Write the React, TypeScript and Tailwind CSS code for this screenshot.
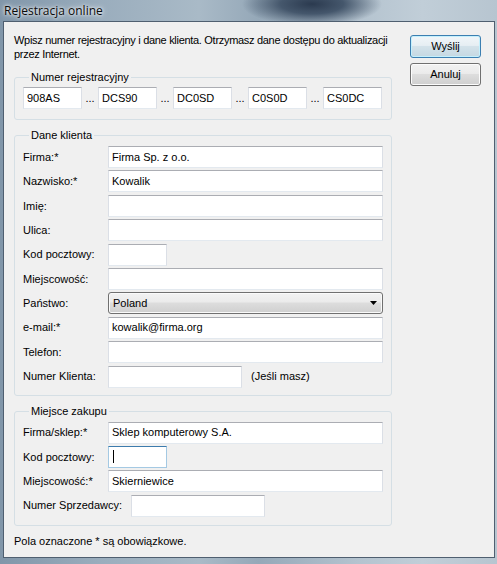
import React from 'react';

const font = "font-['Liberation_Sans',Arial,sans-serif]";

const TextBox = ({ value, className = '', focused = false }: { value?: string; className?: string; focused?: boolean }) => (
  <div
    className={`h-[22px] bg-white border flex items-center pl-[3px] text-[11px] text-black whitespace-nowrap overflow-hidden ${
      focused
        ? 'border-[#a4c9e3] border-t-[#3d7bad]'
        : 'border-[#e3e9ef] border-t-[#abadb3] border-x-[#dbdfe6]'
    } ${className}`}
  >
    {value}
    {focused && <span className="ml-[1px] w-[1px] h-[13px] bg-black" />}
  </div>
);

const Row = ({ label, labelW = 'w-[85px]', children }: { label: string; labelW?: string; children: React.ReactNode }) => (
  <div className="flex items-center h-[22px]">
    <span className={`${labelW} shrink-0 text-[11px] text-black`}>{label}</span>
    {children}
  </div>
);

const Group = ({ title, children, className = '' }: { title: string; children: React.ReactNode; className?: string }) => (
  <fieldset className={`border border-[#d5dfe5] rounded-[3px] px-[8px] ${className}`}>
    <legend className="ml-[6px] px-[2px] text-[11px] leading-[13px] text-black">{title}</legend>
    {children}
  </fieldset>
);

const Button = ({ label, primary = false }: { label: string; primary?: boolean }) => (
  <div
    className={`w-[71px] h-[23px] rounded-[3px] border flex items-center justify-center text-[11px] text-black ${
      primary
        ? 'border-[#3c7fb1] shadow-[inset_0_0_0_1px_#c4f0fd] bg-[linear-gradient(#f1f6f9_0%,#e6eef3_45%,#d3e2ea_50%,#c5d8e2_100%)]'
        : 'border-[#707070] shadow-[inset_0_0_0_1px_#fcfcfc] bg-[linear-gradient(#f2f2f2_0%,#ebebeb_45%,#dddddd_50%,#cfcfcf_100%)]'
    }`}
  >
    {label}
  </div>
);

const RegNumbers = () => {
  const parts = ['908AS', 'DCS90', 'DC0SD', 'C0S0D', 'CS0DC'];
  return (
    <div className="flex items-center">
      {parts.map((p, i) => (
        <React.Fragment key={p}>
          {i > 0 && <span className="w-[16px] text-center text-[11px] text-black">...</span>}
          <TextBox value={p} className="w-[59px]" />
        </React.Fragment>
      ))}
    </div>
  );
};

export default function App() {
  return (
    <div
      className={`w-[497px] h-[564px] flex flex-col ${font} bg-[radial-gradient(ellipse_70px_22px_at_312px_4px,#2b3a4f_0%,#45576c_45%,transparent_100%),linear-gradient(90deg,#8196a9_0%,#9aadbd_20%,#a9bac7_40%,#95a8b8_52%,#b4c3cf_72%,#c1ced8_85%,#b7c5d0_100%)]`}
    >
      {/* title bar */}
      <div className="h-[21px] shrink-0 flex items-center pl-[4px]">
        <span className="font-['Open_Sans',sans-serif] text-[12px] text-[#0b0b0b] [text-shadow:0_0_6px_#ffffff,0_0_3px_#ffffff]">
          Rejestracja online
        </span>
      </div>

      <div className="flex flex-1 pl-[3px] pr-[2px] pb-[6px]">
        <div className="flex-1 bg-[#f0f0f0] border border-[#4f5f70] flex pl-[10px]">
          {/* left column */}
          <div className="w-[378px] flex flex-col pt-[11px]">
            <p className="w-[392px] text-[11px] leading-[14px] tracking-[-0.3px] text-black">
              Wpisz numer rejestracyjny i dane klienta. Otrzymasz dane dostępu do aktualizacji przez Internet.
            </p>

            <Group title="Numer rejestracyjny" className="mt-[10px] pt-[3px] pb-[10px]">
              <RegNumbers />
            </Group>

            <Group title="Dane klienta" className="mt-[9px] pt-[4px] pb-[7px]">
              <div className="flex flex-col gap-[2.4px]">
                <Row label="Firma:*"><TextBox value="Firma Sp. z o.o." className="w-[275px]" /></Row>
                <Row label="Nazwisko:*"><TextBox value="Kowalik" className="w-[275px]" /></Row>
                <Row label="Imię:"><TextBox className="w-[275px]" /></Row>
                <Row label="Ulica:"><TextBox className="w-[275px]" /></Row>
                <Row label="Kod pocztowy:"><TextBox className="w-[59px]" /></Row>
                <Row label="Miejscowość:"><TextBox className="w-[275px]" /></Row>
                <Row label="Państwo:">
                  <div className="w-[275px] h-[22px] rounded-[3px] border border-[#707070] shadow-[inset_0_0_0_1px_#fafafa] bg-[linear-gradient(#f2f2f2_0%,#ebebeb_45%,#dddddd_50%,#cfcfcf_100%)] flex items-center justify-between pl-[4px] pr-[3px] text-[11px] text-black">
                    <span>Poland</span>
                    <svg width="7" height="4" viewBox="0 0 7 4" className="mr-[2px]">
                      <path d="M0 0H7L3.5 4Z" fill="#000" />
                    </svg>
                  </div>
                </Row>
                <Row label="e-mail:*"><TextBox value="kowalik@firma.org" className="w-[275px]" /></Row>
                <Row label="Telefon:"><TextBox className="w-[275px]" /></Row>
                <Row label="Numer Klienta:">
                  <TextBox className="w-[134px]" />
                  <span className="ml-[9px] text-[11px] text-black">(Jeśli masz)</span>
                </Row>
              </div>
            </Group>

            <Group title="Miejsce zakupu" className="mt-[9px] pt-[4px] pb-[8px]">
              <div className="flex flex-col gap-[2.4px]">
                <Row label="Firma/sklep:*"><TextBox value="Sklep komputerowy S.A." className="w-[275px]" /></Row>
                <Row label="Kod pocztowy:"><TextBox focused className="w-[59px]" /></Row>
                <Row label="Miejscowość:*"><TextBox value="Skierniewice" className="w-[275px]" /></Row>
                <Row label="Numer Sprzedawcy:" labelW="w-[108px]"><TextBox className="w-[134px]" /></Row>
              </div>
            </Group>

            <p className="mt-[8px] text-[11px] leading-[14px] text-black">Pola oznaczone * są obowiązkowe.</p>
          </div>

          {/* right column */}
          <div className="ml-[18px] pt-[13px] flex flex-col gap-[5px]">
            <Button label="Wyślij" primary />
            <Button label="Anuluj" />
          </div>
        </div>
      </div>
    </div>
  );
}
